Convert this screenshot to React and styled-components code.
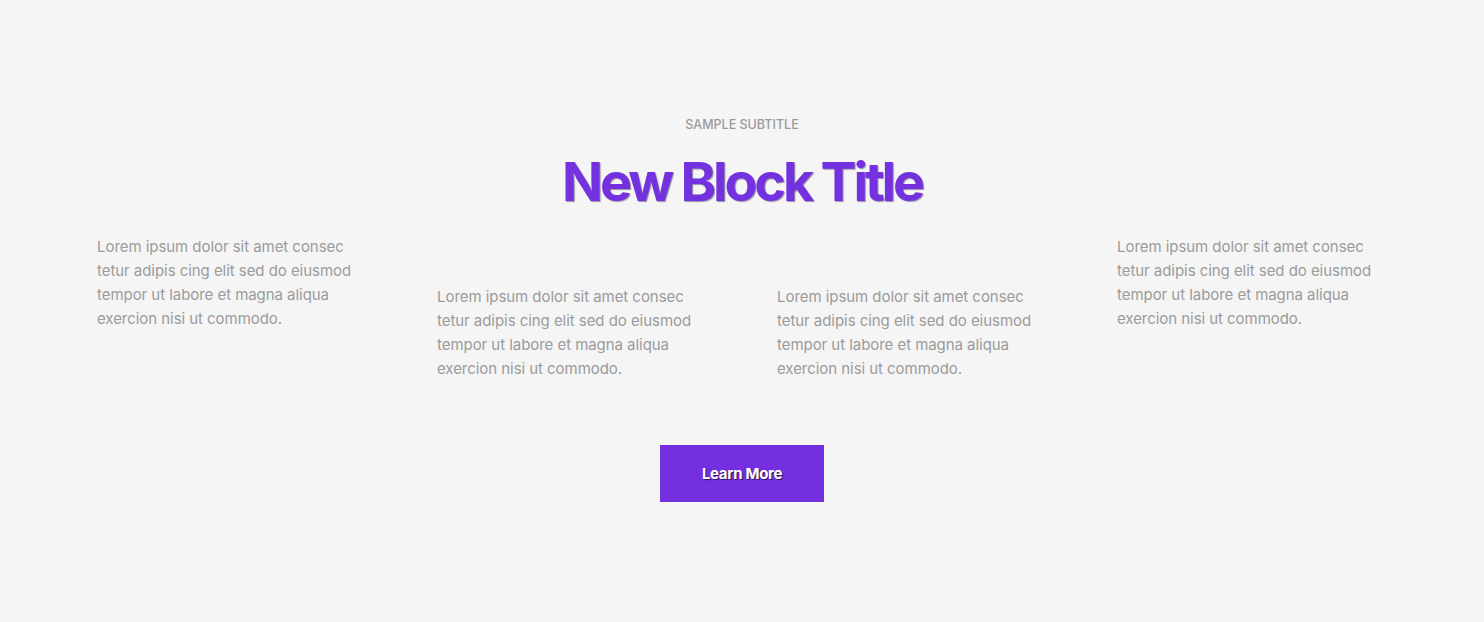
import React from "react";
import styled, { createGlobalStyle } from "styled-components";

const Global = createGlobalStyle`
  html, body { margin: 0; padding: 0; background: #f5f5f5; }
  body { font-family: Inter, "Noto Sans", sans-serif; }
`;

const Section = styled.section`
  min-height: 622px;
  box-sizing: border-box;
  padding-top: 117px;
  display: flex;
  flex-direction: column;
  align-items: center;
`;

const Subtitle = styled.div`
  font-size: 12.5px;
  font-weight: 500;
  color: #9a9a9a;
  text-transform: uppercase;
  line-height: 16px;
`;

const Title = styled.h2`
  margin: 15px 0 0;
  font-size: 54px;
  line-height: 68px;
  font-weight: 700;
  letter-spacing: -3.2px;
  color: #7431e0;
  text-shadow: 1px 1px 1px rgba(40, 20, 60, 0.45);
`;

const Grid = styled.div`
  display: grid;
  grid-template-columns: repeat(4, 340px);
  margin-top: 19px;
`;

const Col = styled.p`
  margin: ${(p) => (p.$low ? "50px" : "0")} 0 0;
  padding-left: 35px;
  width: 262px;
  font-size: 15px;
  line-height: 24px;
  letter-spacing: -0.05px;
  color: #9b9b9b;
`;

const Button = styled.button`
  margin-top: 64px;
  width: 164px;
  height: 57px;
  border: none;
  background: #742fe0;
  color: #fff;
  font-family: Inter, sans-serif;
  font-weight: 700;
  font-size: 15px;
  letter-spacing: -0.3px;
  text-shadow: 1px 1px 1px rgba(0, 0, 0, 0.6);
  cursor: pointer;
`;

const text =
  "Lorem ipsum dolor sit amet consec tetur adipis cing elit sed do eiusmod tempor ut labore et magna aliqua exercion nisi ut commodo.";

export default function App() {
  return (
    <>
      <Global />
      <Section>
        <Subtitle>Sample Subtitle</Subtitle>
        <Title>New Block Title</Title>
        <Grid>
          <Col>{text}</Col>
          <Col $low>{text}</Col>
          <Col $low>{text}</Col>
          <Col>{text}</Col>
        </Grid>
        <Button>Learn More</Button>
      </Section>
    </>
  );
}
